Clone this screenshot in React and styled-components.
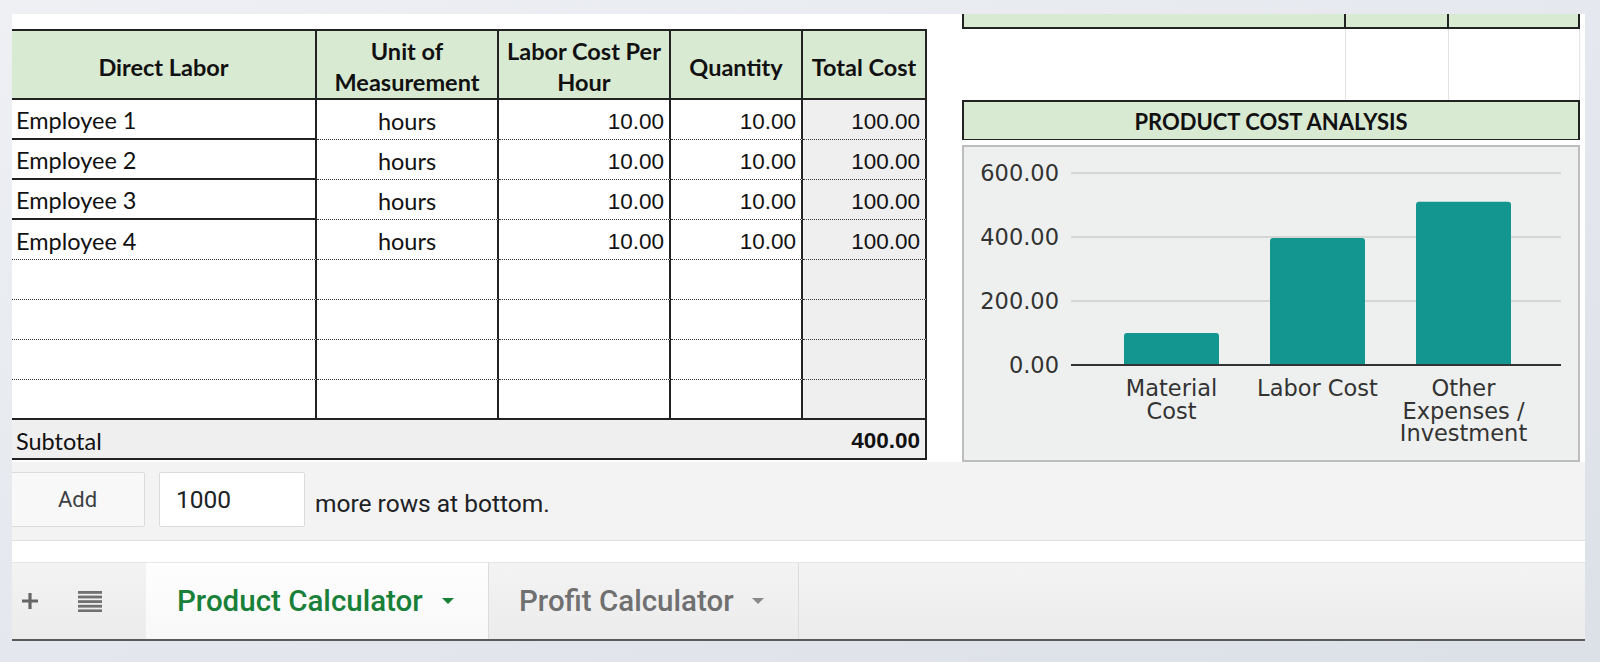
import React from 'react';
import styled, { createGlobalStyle } from 'styled-components';

const Global = createGlobalStyle`
  html, body { margin: 0; padding: 0; }
  body {
    width: 1600px;
    height: 662px;
    overflow: hidden;
    background: linear-gradient(160deg, #eef0f4 0%, #e4e7ed 55%, #dce0e7 100%);
  }
  * { box-sizing: border-box; }
`;

const Page = styled.div`
  width: 1600px;
  height: 662px;
  padding: 14px 15px 21px 12px;
`;

const Screen = styled.div`
  width: 1573px;
  height: 627px;
  display: flex;
  flex-direction: column;
  overflow: hidden;
  background: #f3f3f3;
  border-bottom: 2px solid #5a5a5a;
`;

const Sheet = styled.div`
  height: 448px;
  flex: none;
  display: flex;
  align-items: flex-start;
  gap: 35px;
  background: #fff;
`;

const LeftCol = styled.div`
  padding-top: 15px;
  width: 915px;
  flex: none;
`;

const LaborGrid = styled.div`
  display: grid;
  grid-template-columns: 305px 182px 172px 132px 124px;
  grid-template-rows: 69px;
  grid-auto-rows: 40px;
  border-top: 2px solid #222;
  color: #111;
  background: #fff;
`;

const calibri = `Lato, "Open Sans", "Noto Sans", sans-serif`;
const arial = `"Liberation Sans", Arial, sans-serif`;

const HeadCell = styled.div`
  display: flex;
  align-items: center;
  justify-content: center;
  text-align: center;
  padding-top: 5px;
  background: #d9ead3;
  border-right: 2px solid #222;
  border-bottom: 2px solid #222;
  font-family: ${calibri};
  font-weight: 700;
  font-size: 23.5px;
  line-height: 31px;
`;

const Cell = styled.div`
  display: flex;
  align-items: center;
  justify-content: ${p => (p.$align === 'right' ? 'flex-end' : p.$align === 'center' ? 'center' : 'flex-start')};
  padding: ${p => (p.$num ? '5px' : '2px')} ${p => (p.$align === 'right' ? '5px' : '0')} 0 ${p => (p.$align === 'left' ? '4px' : '0')};
  background: ${p => (p.$shade ? '#efefef' : '#fff')};
  border-right: 2px solid #222;
  border-bottom: ${p => (p.$edge === 'solid' ? '2px solid #222' : '1px dotted #333')};
  font-family: ${p => (p.$num ? arial : calibri)};
  font-size: ${p => (p.$num ? '22.5px' : '23.5px')};
  white-space: nowrap;
`;

const SubtotalRow = styled.div`
  grid-column: 1 / -1;
  display: flex;
  align-items: center;
  justify-content: space-between;
  padding: 3px 5px 0 4px;
  background: #efefef;
  border-right: 2px solid #222;
  border-bottom: 2px solid #222;
`;

const SubLabel = styled.span`
  font-family: ${calibri};
  font-size: 23.5px;
`;

const SubValue = styled.span`
  font-family: ${arial};
  font-weight: 700;
  font-size: 22.5px;
`;

const RightCol = styled.div`
  width: 618px;
  flex: none;
  display: flex;
  flex-direction: column;
`;

const StripGrid = styled.div`
  display: grid;
  grid-template-columns: 384px 103px 131px;
  height: ${p => p.$h}px;
`;

const StripCell = styled.div`
  background: ${p => (p.$head ? '#d9ead3' : '#fff')};
  border-right: ${p => (p.$head ? '2px solid #222' : '1px solid #e3e3e3')};
  border-left: ${p => (p.$head && p.$first ? '2px solid #222' : 'none')};
  border-bottom: ${p => (p.$head ? '2px solid #222' : 'none')};
`;

const AnalysisHeader = styled.div`
  height: 40px;
  display: flex;
  align-items: center;
  justify-content: center;
  padding-top: 2px;
  background: #d9ead3;
  border: 2px solid #222;
  border-bottom-width: 1px;
  font-family: ${calibri};
  font-weight: 700;
  font-size: 22px;
  color: #111;
`;

const ChartBox = styled.div`
  margin-top: 5px;
  height: 317px;
  border: 2px solid #bdbdbd;
  background: #eef0ef;
  svg { display: block; }
`;

const AddRowsBar = styled.div`
  height: 79px;
  flex: none;
  display: flex;
  align-items: flex-start;
  padding-top: 10px;
  border-bottom: 1px solid #e0e0e0;
  font-family: Roboto, sans-serif;
`;

const AddButton = styled.div`
  margin-left: -12px;
  width: 145px;
  height: 55px;
  display: flex;
  align-items: center;
  justify-content: center;
  padding-left: 10px;
  background: #f8f8f8;
  border: 1px solid #dcdcdc;
  border-radius: 2px;
  font-size: 22px;
  color: #3c4043;
`;

const CountInput = styled.div`
  margin-left: 14px;
  width: 146px;
  height: 55px;
  display: flex;
  align-items: center;
  padding-left: 16px;
  background: #fff;
  border: 1px solid #dcdcdc;
  border-radius: 2px;
  font-size: 24.5px;
  color: #202124;
`;

const MoreText = styled.span`
  margin: 16px 0 0 10px;
  font-size: 24.5px;
  line-height: 32px;
  color: #202124;
`;

const WhiteStrip = styled.div`
  height: 21px;
  flex: none;
  background: #fff;
`;

const TabBar = styled.div`
  height: 77px;
  flex: none;
  display: flex;
  align-items: stretch;
  padding-left: 8px;
  background: linear-gradient(#f3f3f3, #ececec);
  border-top: 1px solid #e6e6e6;
  font-family: Roboto, sans-serif;
`;

const IconSlot = styled.div`
  display: flex;
  align-items: center;
  margin-right: ${p => p.$gap}px;
`;

const Tab = styled.div`
  width: ${p => p.$w}px;
  display: flex;
  align-items: center;
  padding-left: ${p => p.$pad}px;
  background: ${p => (p.$active ? 'linear-gradient(#fefefe, #f8f8f8)' : 'transparent')};
  border-right: 1px solid #dcdcdc;
  font-size: 29.5px;
  font-weight: 500;
  color: ${p => (p.$active ? '#188038' : '#707070')};
`;

const Caret = styled.span`
  margin-left: ${p => p.$gap}px;
  width: 0;
  height: 0;
  border-left: 6px solid transparent;
  border-right: 6px solid transparent;
  border-top: 6px solid ${p => p.$color};
`;

const rows = [
  { name: 'Employee 1', unit: 'hours', rate: '10.00', qty: '10.00', total: '100.00', solid: true },
  { name: 'Employee 2', unit: 'hours', rate: '10.00', qty: '10.00', total: '100.00', solid: true },
  { name: 'Employee 3', unit: 'hours', rate: '10.00', qty: '10.00', total: '100.00', solid: true },
  { name: 'Employee 4', unit: 'hours', rate: '10.00', qty: '10.00', total: '100.00' },
  {}, {}, {}, { last: true },
];

const bars = [
  { x: 160, v: 100, lines: ['Material', 'Cost'] },
  { x: 306, v: 397, lines: ['Labor Cost'] },
  { x: 452, v: 510, lines: ['Other', 'Expenses /', 'Investment'] },
];

function Chart() {
  const base = 218;
  const step = 64;
  const scale = step / 200;
  const w = 95;
  return (
    <svg width="614" height="313" viewBox="0 0 614 313" fontFamily='"DejaVu Sans", Verdana, sans-serif' fontSize="22.5">
      {[0, 200, 400, 600].map((v, i) => {
        const y = base - i * step;
        return (
          <g key={v}>
            <line x1="107" x2="597" y1={y} y2={y} stroke={i === 0 ? '#333' : '#cdcdcd'} strokeWidth={i === 0 ? 2 : 1.5} />
            <text x="95" y={y + 8} textAnchor="end" fill="#333">{v.toFixed(2)}</text>
          </g>
        );
      })}
      {bars.map(b => {
        const h = b.v * scale;
        const top = base - h;
        const r = 3;
        return (
          <g key={b.x}>
            <path
              d={`M${b.x} ${base} V${top + r} Q${b.x} ${top} ${b.x + r} ${top} H${b.x + w - r} Q${b.x + w} ${top} ${b.x + w} ${top + r} V${base} Z`}
              fill="#139690"
            />
            {b.lines.map((t, i) => (
              <text key={t} x={b.x + w / 2} y={249 + i * 22.7} textAnchor="middle" fill="#333">{t}</text>
            ))}
          </g>
        );
      })}
      <line x1="107" x2="597" y1={base} y2={base} stroke="#333" strokeWidth="2" />
    </svg>
  );
}

function PlusIcon() {
  return (
    <svg width="20" height="20" viewBox="0 0 20 20">
      <path d="M10 2v16M2 10h16" stroke="#666" strokeWidth="3.2" />
    </svg>
  );
}

function ListIcon() {
  return (
    <svg width="24" height="21" viewBox="0 0 24 21">
      {[0, 4.6, 9.2, 13.8, 18.4].map(y => (
        <rect key={y} x="0" y={y} width="24" height="2.8" fill="#707070" />
      ))}
    </svg>
  );
}

export default function App() {
  return (
    <>
      <Global />
      <Page>
        <Screen>
          <Sheet>
            <LeftCol>
              <LaborGrid>
                <HeadCell>Direct Labor</HeadCell>
                <HeadCell>Unit of<br />Measurement</HeadCell>
                <HeadCell>Labor Cost Per<br />Hour</HeadCell>
                <HeadCell>Quantity</HeadCell>
                <HeadCell>Total Cost</HeadCell>
                {rows.map((r, i) => {
                  const edge = r.last ? 'solid' : 'dotted';
                  return (
                    <React.Fragment key={i}>
                      <Cell $align="left" $edge={r.solid || r.last ? 'solid' : 'dotted'}>{r.name}</Cell>
                      <Cell $align="center" $edge={edge}>{r.unit}</Cell>
                      <Cell $align="right" $num $edge={edge}>{r.rate}</Cell>
                      <Cell $align="right" $num $edge={edge}>{r.qty}</Cell>
                      <Cell $align="right" $num $shade $edge={edge}>{r.total}</Cell>
                    </React.Fragment>
                  );
                })}
                <SubtotalRow>
                  <SubLabel>Subtotal</SubLabel>
                  <SubValue>400.00</SubValue>
                </SubtotalRow>
              </LaborGrid>
            </LeftCol>
            <RightCol>
              <StripGrid $h={15}>
                <StripCell $head $first />
                <StripCell $head />
                <StripCell $head />
              </StripGrid>
              <StripGrid $h={71}>
                <StripCell />
                <StripCell />
                <StripCell />
              </StripGrid>
              <AnalysisHeader>PRODUCT COST ANALYSIS</AnalysisHeader>
              <ChartBox>
                <Chart />
              </ChartBox>
            </RightCol>
          </Sheet>
          <AddRowsBar>
            <AddButton>Add</AddButton>
            <CountInput>1000</CountInput>
            <MoreText>more rows at bottom.</MoreText>
          </AddRowsBar>
          <WhiteStrip />
          <TabBar>
            <IconSlot $gap={38}><PlusIcon /></IconSlot>
            <IconSlot $gap={44}><ListIcon /></IconSlot>
            <Tab $w={343} $pad={31} $active>
              Product Calculator
              <Caret $gap={19} $color="#188038" />
            </Tab>
            <Tab $w={310} $pad={30}>
              Profit Calculator
              <Caret $gap={18} $color="#8a8a8a" />
            </Tab>
          </TabBar>
        </Screen>
      </Page>
    </>
  );
}
